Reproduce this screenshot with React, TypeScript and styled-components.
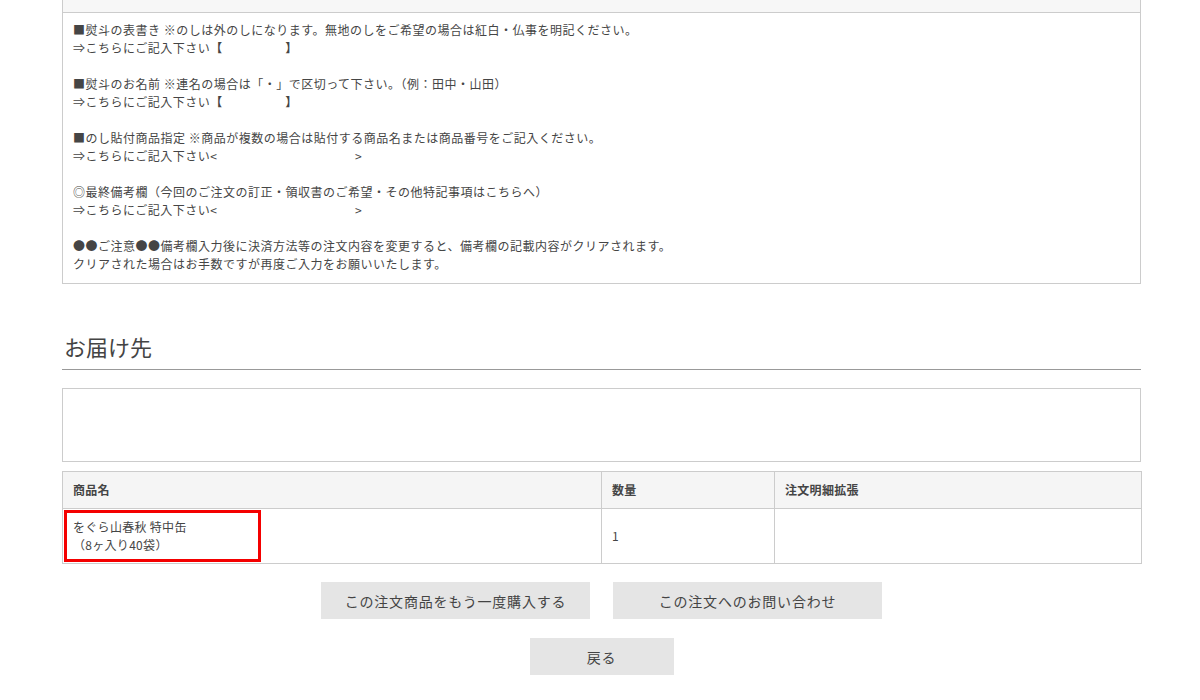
import styled, { createGlobalStyle } from 'styled-components'

const GlobalStyle = createGlobalStyle`
  html, body {
    margin: 0;
    padding: 0;
    background: #fff;
  }
  body {
    font-family: "Noto Sans CJK JP", "Noto Sans", sans-serif;
    color: #444;
  }
`

const Page = styled.div`
  width: 1079px;
  padding: 0 59px 40px 62px;
`

const NoteBox = styled.section`
  border: 1px solid #ccc;
  border-top: none;
`

const NoteHead = styled.div`
  height: 12px;
  background: #f7f7f7;
  border-bottom: 1px solid #ccc;
`

const NoteBody = styled.div`
  padding: 8px 10px 10px;
  font-size: 12px;
  line-height: 18px;
  letter-spacing: 0.5px;
  color: #454545;
`

const Para = styled.p`
  margin: 0 0 18px;
  &:last-child {
    margin-bottom: 0;
  }
`

const Bracket = styled.span`
  font-weight: bold;
`

const Heading = styled.h2`
  margin: 48px 0 0;
  padding: 0 2px 9px;
  font-size: 22px;
  line-height: 28px;
  font-weight: normal;
  color: #444;
  border-bottom: 1px solid #999;
`

const AddressBox = styled.div`
  margin-top: 18px;
  height: 72px;
  border: 1px solid #ccc;
`

const Table = styled.table`
  margin-top: 9px;
  width: 100%;
  table-layout: fixed;
  border-collapse: collapse;
  font-size: 12px;
  line-height: 18px;
  letter-spacing: 0.3px;
  color: #454545;
`

const Th = styled.th<{ $w: number }>`
  width: ${(p) => p.$w}px;
  height: 37px;
  padding: 0 10px;
  box-sizing: border-box;
  text-align: left;
  font-weight: bold;
  background: #f5f5f5;
  border: 1px solid #ccc;
`

const Td = styled.td`
  position: relative;
  height: 54px;
  padding: 0 10px;
  vertical-align: middle;
  border: 1px solid #ccc;
`

const Highlight = styled.span`
  position: absolute;
  left: 1px;
  top: 1px;
  width: 191px;
  height: 46px;
  border: 3px solid #f40000;
  pointer-events: none;
`

const ButtonRow = styled.div<{ $top: number }>`
  display: flex;
  justify-content: center;
  gap: 23px;
  margin-top: ${(p) => p.$top}px;
`

const Button = styled.button<{ $w: number }>`
  width: ${(p) => p.$w}px;
  height: 37px;
  border: none;
  background: #e5e5e5;
  color: #444;
  font-family: "Noto Sans CJK JP", "Noto Sans", sans-serif;
  font-size: 14px;
  letter-spacing: 0.8px;
  cursor: pointer;
`

const S = '　'

export default function App() {
  return (
    <Page>
      <GlobalStyle />
      <NoteBox>
        <NoteHead />
        <NoteBody>
          <Para>
            ■熨斗の表書き ※のしは外のしになります。無地のしをご希望の場合は紅白・仏事を明記ください。
            <br />
            ⇒こちらにご記入下さい<Bracket>【</Bracket>{S.repeat(5)}<Bracket>】</Bracket>
          </Para>
          <Para>
            ■熨斗のお名前 ※連名の場合は「・」で区切って下さい。（例：田中・山田）
            <br />
            ⇒こちらにご記入下さい<Bracket>【</Bracket>{S.repeat(5)}<Bracket>】</Bracket>
          </Para>
          <Para>
            ■のし貼付商品指定 ※商品が複数の場合は貼付する商品名または商品番号をご記入ください。
            <br />
            ⇒こちらにご記入下さい&lt;{S.repeat(11)}&gt;
          </Para>
          <Para>
            ◎最終備考欄（今回のご注文の訂正・領収書のご希望・その他特記事項はこちらへ）
            <br />
            ⇒こちらにご記入下さい&lt;{S.repeat(11)}&gt;
          </Para>
          <Para>
            ●●ご注意●●備考欄入力後に決済方法等の注文内容を変更すると、備考欄の記載内容がクリアされます。
            <br />
            クリアされた場合はお手数ですが再度ご入力をお願いいたします。
          </Para>
        </NoteBody>
      </NoteBox>

      <Heading>お届け先</Heading>
      <AddressBox />

      <Table>
        <thead>
          <tr>
            <Th $w={539}>商品名</Th>
            <Th $w={173}>数量</Th>
            <Th $w={367}>注文明細拡張</Th>
          </tr>
        </thead>
        <tbody>
          <tr>
            <Td>
              <Highlight />
              をぐら山春秋 特中缶
              <br />
              （8ヶ入り40袋）
            </Td>
            <Td>1</Td>
            <Td />
          </tr>
        </tbody>
      </Table>

      <ButtonRow $top={18}>
        <Button $w={269}>この注文商品をもう一度購入する</Button>
        <Button $w={269}>この注文へのお問い合わせ</Button>
      </ButtonRow>
      <ButtonRow $top={19}>
        <Button $w={144}>戻る</Button>
      </ButtonRow>
    </Page>
  )
}
